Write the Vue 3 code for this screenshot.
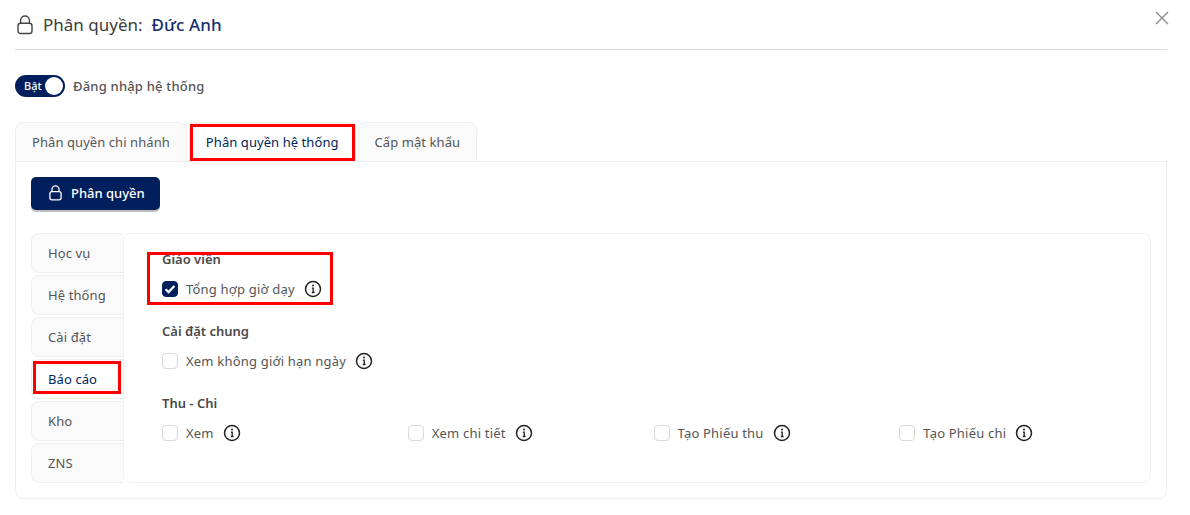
<script setup>
const sideTabs = ['Học vụ', 'Hệ thống', 'Cài đặt', 'Báo cáo', 'Kho', 'ZNS']
const tabs = ['Phân quyền chi nhánh', 'Phân quyền hệ thống', 'Cấp mật khẩu']
const groups = [
  { title: 'Giáo viên', items: [{ label: 'Tổng hợp giờ dạy', checked: true }] },
  { title: 'Cài đặt chung', items: [{ label: 'Xem không giới hạn ngày' }] },
  { title: 'Thu - Chi', items: [{ label: 'Xem' }, { label: 'Xem chi tiết' }, { label: 'Tạo Phiếu thu' }, { label: 'Tạo Phiếu chi' }] },
]
</script>

<template>
  <div class="modal">
    <header class="head">
      <svg class="lock" width="16" height="20" viewBox="0 0 16 20" fill="none" stroke="#444" stroke-width="1.4">
        <rect x="1" y="8.2" width="14" height="10.3" rx="2.6" />
        <path d="M3.6 8V5.4a4.4 4.4 0 0 1 8.8 0V8" />
      </svg>
      <span class="title">Phân quyền:</span>
      <span class="name">Đức Anh</span>
      <svg class="close" width="14" height="14" viewBox="0 0 14 14" stroke="#8c8c8c" stroke-width="1.3">
        <path d="M1 1l12 12M13 1L1 13" />
      </svg>
    </header>

    <div class="login">
      <div class="switch"><span>Bật</span><i></i></div>
      <span class="login-text">Đăng nhập hệ thống</span>
    </div>

    <div class="tabs">
      <div v-for="(t, i) in tabs" :key="t" class="tab" :class="{ active: i === 1 }">{{ t }}</div>
    </div>

    <section class="panel">
      <button class="btn">
        <svg width="13" height="16" viewBox="0 0 16 20" fill="none" stroke="#fff" stroke-width="1.6">
          <rect x="1" y="8.2" width="14" height="10.3" rx="2.6" />
          <path d="M3.6 8V5.4a4.4 4.4 0 0 1 8.8 0V8" />
        </svg>
        Phân quyền
      </button>

      <div class="body">
        <div class="side">
          <div v-for="s in sideTabs" :key="s" class="side-tab" :class="{ active: s === 'Báo cáo' }">{{ s }}</div>
        </div>
        <div class="content">
          <div v-for="g in groups" :key="g.title" class="group">
            <div class="group-title">{{ g.title }}</div>
            <div class="row">
              <div v-for="it in g.items" :key="it.label" class="item">
                <span class="check" :class="{ on: it.checked }">
                  <svg v-if="it.checked" width="12" height="12" viewBox="0 0 12 12" fill="none" stroke="#fff" stroke-width="2.2">
                    <path d="M1.6 6.2l3 2.9 5.8-6" />
                  </svg>
                </span>
                <span class="label">{{ it.label }}</span>
                <svg class="info" width="18" height="18" viewBox="0 0 18 18" fill="none" stroke="#222" stroke-width="1.5">
                  <circle cx="9" cy="9" r="7.5" />
                  <path d="M7.9 8.1H9.2V12.5M7.8 12.5h2.8" stroke-width="1.3" />
                  <circle cx="9" cy="5.5" r="1" fill="#222" stroke="none" />
                </svg>
              </div>
            </div>
          </div>
        </div>
      </div>
    </section>

    <div class="mark mark-tab"></div>
    <div class="mark mark-group"></div>
    <div class="mark mark-side"></div>
  </div>
</template>

<style>
html, body { margin: 0; background: #fff; }
</style>

<style scoped>
.modal {
  position: relative;
  width: 1190px;
  height: 515px;
  box-sizing: border-box;
  padding: 0 23px 0 15px;
  overflow: hidden;
  font-family: "Noto Sans", sans-serif;
  font-size: 13px;
  color: #555;
}
.head {
  position: relative;
  display: flex;
  align-items: center;
  height: 49px;
  border-bottom: 1px solid #d9d9d9;
}
.lock { margin: 0 10px 0 2px; }
.title { font-size: 17px; color: #3c3c3c; }
.name { font-size: 17px; margin-left: 9px; color: #15306e; font-weight: 500; letter-spacing: .1px; }
.close { position: absolute; right: -2px; top: 11px; }
.login {
  display: flex;
  align-items: center;
  gap: 8px;
  margin-top: 25px;
  height: 22px;
}
.switch {
  position: relative;
  width: 50px;
  height: 22px;
  border-radius: 11px;
  background: #001f5c;
  color: #fff;
  font-size: 11px;
  font-weight: 500;
  line-height: 22px;
  box-sizing: border-box;
  padding-left: 9px;
}
.switch i {
  position: absolute;
  right: 2px;
  top: 2px;
  width: 18px;
  height: 18px;
  border-radius: 50%;
  background: #fff;
}
.login-text { font-weight: 500; letter-spacing: .2px; }
.tabs {
  display: flex;
  gap: 2px;
  margin-top: 25px;
  height: 40px;
}
.tab {
  box-sizing: border-box;
  height: 40px;
  padding: 0 16px;
  line-height: 38px;
  border: 1px solid #efefef;
  border-bottom: 0;
  border-radius: 8px 8px 0 0;
  background: #fafafa;
  letter-spacing: .07px;
}
.tab.active { background: #fff; color: #001f5c; }
.panel {
  box-sizing: border-box;
  height: 338px;
  margin-top: -1px;
  padding: 15px;
  border: 1px solid #efefef;
  border-radius: 0 0 8px 8px;
  background: #fff;
  position: relative;
}
.btn {
  display: flex;
  align-items: center;
  gap: 9px;
  width: 129px;
  height: 33px;
  padding: 0 0 1px 18px;
  border: 0;
  border-radius: 5px;
  background: #001f5c;
  color: #fff;
  font: 500 13px "Noto Sans", sans-serif;
  box-shadow: 0 2px 0 rgba(0, 0, 0, .25);
}
.body { display: flex; margin-top: 23px; }
.side { width: 92px; display: flex; flex-direction: column; gap: 2px; }
.side-tab {
  box-sizing: border-box;
  height: 40px;
  padding-left: 16px;
  line-height: 38px;
  border: 1px solid #efefef;
  border-right: 0;
  border-radius: 8px 0 0 8px;
  background: #fafafa;
  letter-spacing: .1px;
}
.side-tab.active { background: #fff; color: #001f5c; }
.content {
  flex: 1;
  box-sizing: border-box;
  height: 250px;
  padding: 15px 5px 0 38px;
  border: 1px solid #f1f1f1;
  border-radius: 8px;
  background: #fff;
}
.group { height: 72px; }
.group-title { font-weight: 600; height: 20px; line-height: 20px; color: #4a4a4a; }
.row { display: grid; grid-template-columns: repeat(4, 1fr); margin-top: 10px; }
.item { display: flex; align-items: center; height: 20px; white-space: nowrap; }
.label { letter-spacing: .2px; }
.check {
  box-sizing: border-box;
  width: 16px;
  height: 16px;
  margin-right: 8px;
  border: 1px solid #d9d9d9;
  border-radius: 4px;
  background: #fff;
  display: flex;
  align-items: center;
  justify-content: center;
}
.check.on { background: #001f5c; border-color: #001f5c; }
.info { margin-left: 9px; }
.mark {
  position: absolute;
  box-sizing: border-box;
  border: 3px solid #f00;
  pointer-events: none;
}
.mark-tab { left: 190px; top: 124px; width: 165px; height: 37px; }
.mark-group { left: 147px; top: 252px; width: 186px; height: 53px; }
.mark-side { left: 33px; top: 361px; width: 88px; height: 33px; }
</style>
